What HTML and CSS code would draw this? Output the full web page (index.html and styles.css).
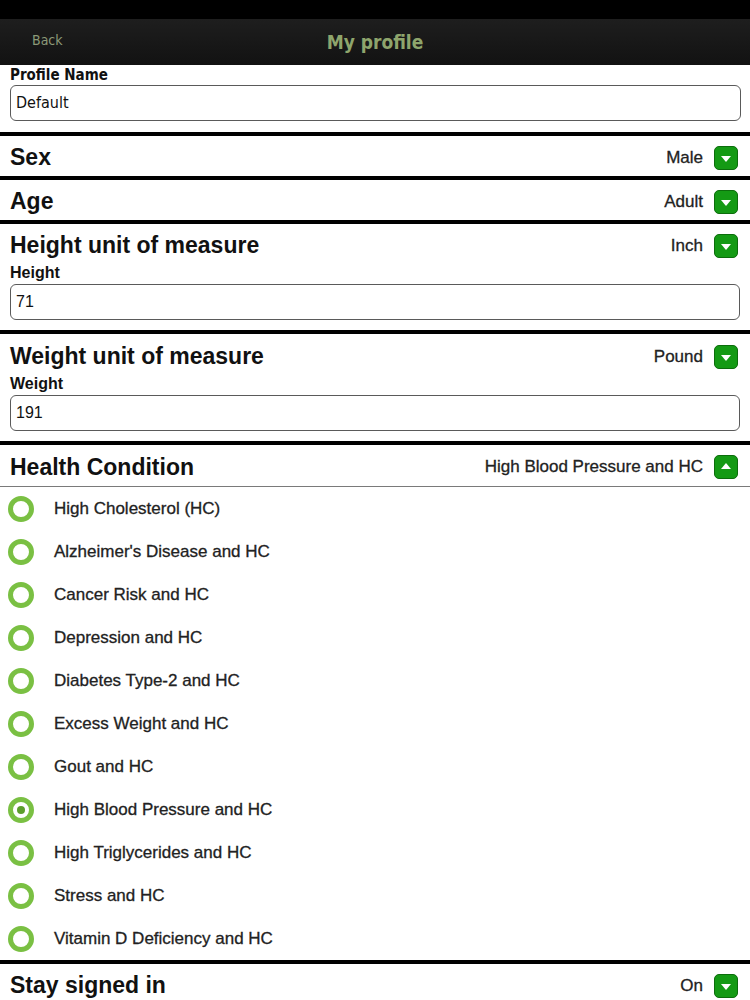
FILE: index.html
```html
<!DOCTYPE html>
<html lang="en">
<head>
    <meta charset="UTF-8">
    <meta name="viewport" content="width=device-width, initial-scale=1.0">
    <title>My profile</title>
    <link rel="stylesheet" href="styles.css">
</head>
<body>
    <div class="statusBar"></div>
    <div class="navBar">
        <span class="backLink">Back</span>
        <span class="navTitle">My profile</span>
    </div>

    <div class="profileName">
        <div class="fieldLabel condensed">Profile Name</div>
        <div class="textBox condensed">Default</div>
    </div>

    <div class="section">
        <div class="sectionHead">
            <span class="sectionTitle">Sex</span>
            <span class="sectionValue">Male</span>
            <span class="dropBtn"></span>
        </div>
    </div>

    <div class="section">
        <div class="sectionHead">
            <span class="sectionTitle">Age</span>
            <span class="sectionValue">Adult</span>
            <span class="dropBtn"></span>
        </div>
    </div>

    <div class="section">
        <div class="sectionHead">
            <span class="sectionTitle">Height unit of measure</span>
            <span class="sectionValue">Inch</span>
            <span class="dropBtn"></span>
        </div>
        <div class="sectionBody">
            <div class="fieldLabel">Height</div>
            <div class="textBox">71</div>
        </div>
    </div>

    <div class="section">
        <div class="sectionHead tallHead">
            <span class="sectionTitle">Weight unit of measure</span>
            <span class="sectionValue">Pound</span>
            <span class="dropBtn"></span>
        </div>
        <div class="sectionBody">
            <div class="fieldLabel">Weight</div>
            <div class="textBox">191</div>
        </div>
    </div>

    <div class="section">
        <div class="sectionHead openHead">
            <span class="sectionTitle">Health Condition</span>
            <span class="sectionValue">High Blood Pressure and HC</span>
            <span class="dropBtn up"></span>
        </div>
        <ul class="optionList">
            <li><span class="radio"></span>High Cholesterol (HC)</li>
            <li><span class="radio"></span>Alzheimer's Disease and HC</li>
            <li><span class="radio"></span>Cancer Risk and HC</li>
            <li><span class="radio"></span>Depression and HC</li>
            <li><span class="radio"></span>Diabetes Type-2 and HC</li>
            <li><span class="radio"></span>Excess Weight and HC</li>
            <li><span class="radio"></span>Gout and HC</li>
            <li><span class="radio checked"></span>High Blood Pressure and HC</li>
            <li><span class="radio"></span>High Triglycerides and HC</li>
            <li><span class="radio"></span>Stress and HC</li>
            <li><span class="radio"></span>Vitamin D Deficiency and HC</li>
        </ul>
    </div>

    <div class="section">
        <div class="sectionHead">
            <span class="sectionTitle">Stay signed in</span>
            <span class="sectionValue">On</span>
            <span class="dropBtn"></span>
        </div>
    </div>
</body>
</html>
```

FILE: styles.css
```css
body {
    margin: 0;
    padding: 0;
    width: 750px;
    height: 1000px;
    overflow: hidden;
    background: #ffffff;
    font-family: 'Liberation Sans', Arial, sans-serif;
    color: #111;
}

.condensed {
    font-family: 'DejaVu Sans Condensed', 'Liberation Sans', sans-serif;
}

.statusBar {
    height: 19px;
    background: #000;
}

.navBar {
    height: 46px;
    background: linear-gradient(to bottom, #1e1e1e, #121212);
    display: flex;
    align-items: center;
    justify-content: center;
    position: relative;
}

.backLink {
    position: absolute;
    left: 32px;
    top: 13px;
    font-family: 'DejaVu Sans Condensed', sans-serif;
    font-size: 14px;
    color: #8c9a78;
}

.navTitle {
    font-family: 'DejaVu Sans Condensed', sans-serif;
    font-weight: bold;
    font-size: 19px;
    color: #8ea56c;
}

/* Profile name */
.profileName {
    padding: 2px 9px 11px 10px;
}

.fieldLabel {
    font-weight: bold;
    font-size: 16px;
    line-height: 18px;
    margin-bottom: 2px;
}

.profileName .fieldLabel {
    font-size: 15px;
    line-height: 17px;
    margin-bottom: 1px;
}

.textBox {
    height: 34px;
    border: 1px solid #5a5a5a;
    border-radius: 6px;
    padding: 0 5px;
    font-size: 16px;
    line-height: 34px;
    color: #111;
}

/* Sekcje */
.section {
    border-top: 4px solid #000;
}

.sectionHead {
    box-sizing: border-box;
    height: 40px;
    display: flex;
    align-items: center;
    padding: 3px 12px 0 10px;
}

.tallHead {
    height: 41px;
    padding-top: 4px;
}

.sectionTitle {
    font-weight: bold;
    font-size: 23px;
    flex: 1;
}

.sectionValue {
    font-size: 17px;
    color: #222;
    margin-right: 11px;
    -webkit-text-stroke: 0.3px #222;
}

.dropBtn {
    width: 22px;
    height: 22px;
    background: #149a14;
    border: 1px solid #0c6d0c;
    border-radius: 5px;
    position: relative;
}

.dropBtn::after {
    content: "";
    position: absolute;
    left: 6px;
    top: 9px;
    border-left: 5px solid transparent;
    border-right: 5px solid transparent;
    border-top: 6px solid #fff;
}

.dropBtn.up::after {
    top: 7px;
    border-top: none;
    border-bottom: 6px solid #fff;
}

.sectionBody {
    padding: 0 10px 10px 10px;
}

.openHead {
    height: 42px;
    border-bottom: 1px solid #7a7a7a;
}

/* Lista */
.optionList {
    list-style: none;
    margin: 0;
    padding: 0;
}

.optionList li {
    height: 43px;
    display: flex;
    align-items: center;
    font-size: 17px;
    color: #222;
    -webkit-text-stroke: 0.3px #222;
}

.radio {
    width: 16px;
    height: 16px;
    border: 5px solid #7ac043;
    border-radius: 50%;
    margin: 0 20px 0 8px;
    box-sizing: content-box;
    background: #fff;
    position: relative;
}

.radio.checked::after {
    content: "";
    position: absolute;
    left: 4px;
    top: 4px;
    width: 8px;
    height: 8px;
    border-radius: 50%;
    background: #5c9e2c;
}
```
